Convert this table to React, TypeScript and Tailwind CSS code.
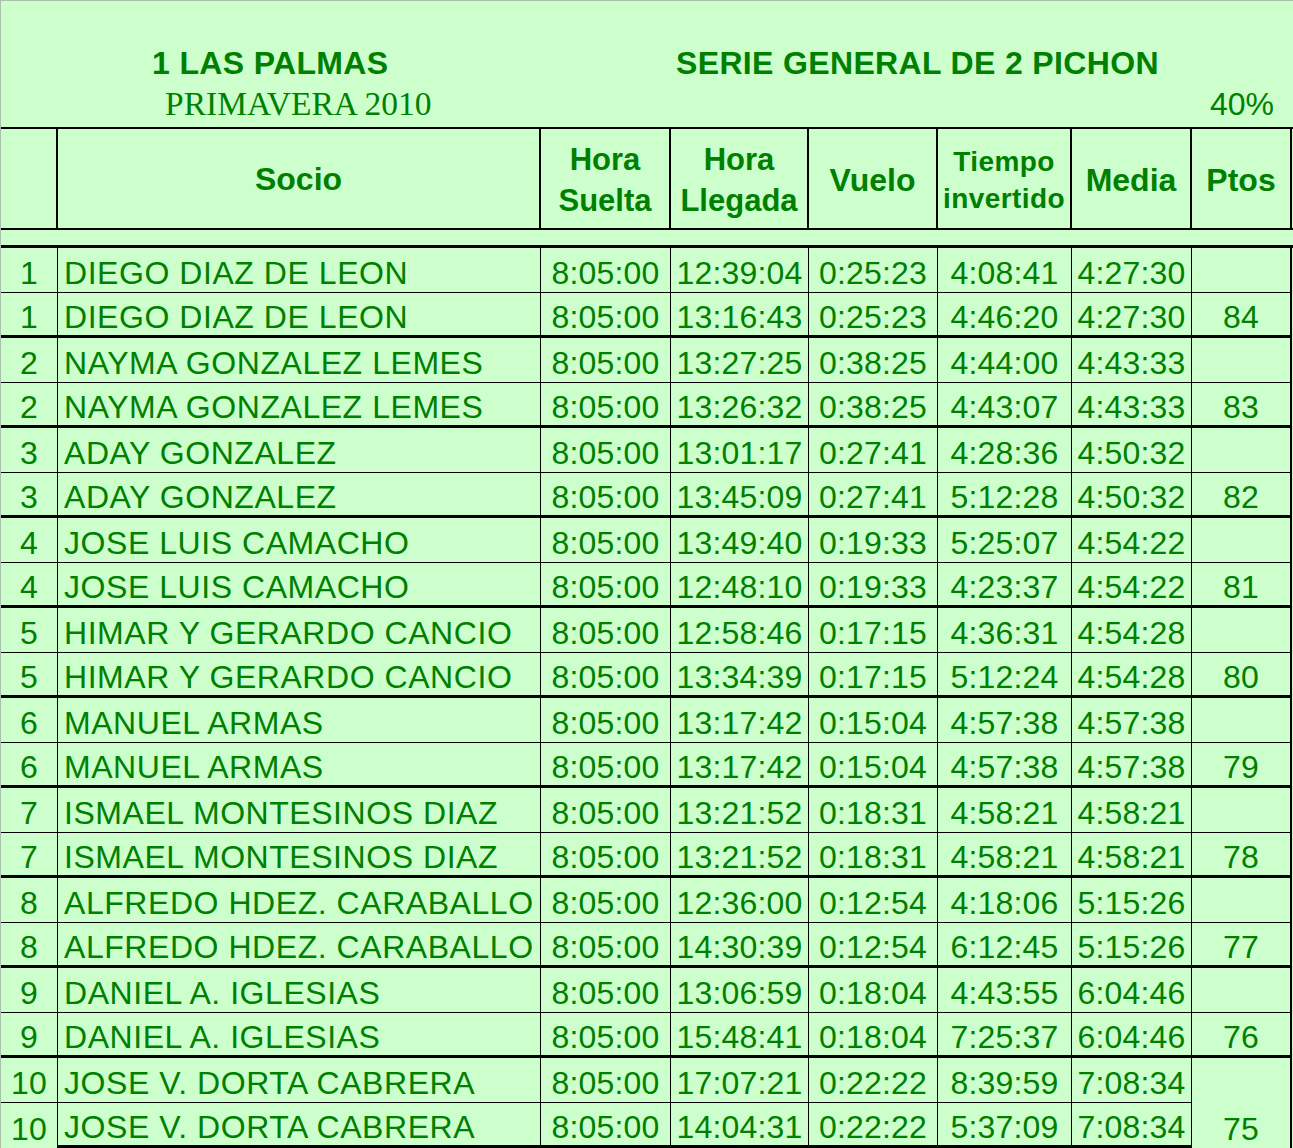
import React from "react";

type Row = [string, string, string, string, string, string, string, string];

const groups: [Row, Row][] = [
  [
    ["1", "DIEGO DIAZ DE LEON", "8:05:00", "12:39:04", "0:25:23", "4:08:41", "4:27:30", ""],
    ["1", "DIEGO DIAZ DE LEON", "8:05:00", "13:16:43", "0:25:23", "4:46:20", "4:27:30", "84"],
  ],
  [
    ["2", "NAYMA GONZALEZ LEMES", "8:05:00", "13:27:25", "0:38:25", "4:44:00", "4:43:33", ""],
    ["2", "NAYMA GONZALEZ LEMES", "8:05:00", "13:26:32", "0:38:25", "4:43:07", "4:43:33", "83"],
  ],
  [
    ["3", "ADAY GONZALEZ", "8:05:00", "13:01:17", "0:27:41", "4:28:36", "4:50:32", ""],
    ["3", "ADAY GONZALEZ", "8:05:00", "13:45:09", "0:27:41", "5:12:28", "4:50:32", "82"],
  ],
  [
    ["4", "JOSE LUIS CAMACHO", "8:05:00", "13:49:40", "0:19:33", "5:25:07", "4:54:22", ""],
    ["4", "JOSE LUIS CAMACHO", "8:05:00", "12:48:10", "0:19:33", "4:23:37", "4:54:22", "81"],
  ],
  [
    ["5", "HIMAR Y GERARDO CANCIO", "8:05:00", "12:58:46", "0:17:15", "4:36:31", "4:54:28", ""],
    ["5", "HIMAR Y GERARDO CANCIO", "8:05:00", "13:34:39", "0:17:15", "5:12:24", "4:54:28", "80"],
  ],
  [
    ["6", "MANUEL ARMAS", "8:05:00", "13:17:42", "0:15:04", "4:57:38", "4:57:38", ""],
    ["6", "MANUEL ARMAS", "8:05:00", "13:17:42", "0:15:04", "4:57:38", "4:57:38", "79"],
  ],
  [
    ["7", "ISMAEL MONTESINOS DIAZ", "8:05:00", "13:21:52", "0:18:31", "4:58:21", "4:58:21", ""],
    ["7", "ISMAEL MONTESINOS DIAZ", "8:05:00", "13:21:52", "0:18:31", "4:58:21", "4:58:21", "78"],
  ],
  [
    ["8", "ALFREDO HDEZ. CARABALLO", "8:05:00", "12:36:00", "0:12:54", "4:18:06", "5:15:26", ""],
    ["8", "ALFREDO HDEZ. CARABALLO", "8:05:00", "14:30:39", "0:12:54", "6:12:45", "5:15:26", "77"],
  ],
  [
    ["9", "DANIEL A. IGLESIAS", "8:05:00", "13:06:59", "0:18:04", "4:43:55", "6:04:46", ""],
    ["9", "DANIEL A. IGLESIAS", "8:05:00", "15:48:41", "0:18:04", "7:25:37", "6:04:46", "76"],
  ],
  [
    ["10", "JOSE V. DORTA CABRERA", "8:05:00", "17:07:21", "0:22:22", "8:39:59", "7:08:34", ""],
    ["10", "JOSE V. DORTA CABRERA", "8:05:00", "14:04:31", "0:22:22", "5:37:09", "7:08:34", "75"],
  ],
];

const widths = ["w-[57px]", "w-[483px]", "w-[130px]", "w-[138px]", "w-[129px]", "w-[134px]", "w-[120px]", "w-[100px]"];

function BodyRow({ row, second, last }: { row: Row; second: boolean; last: boolean }) {
  const bottom = second ? "border-b-[3px]" : "border-b";
  return (
    <div className="flex h-[45px]">
      {row.map((v, i) => {
        const isPtos = i === 7;
        const isRank = i === 0;
        let b = bottom;
        if (last && (isPtos || (isRank && second))) b = "border-b-0";
        const right = isPtos ? "border-r-2" : "border-r";
        const align = i === 1 ? "justify-start pl-[6px] tracking-[0.55px]" : "justify-center tracking-[0.2px]";
        return (
          <div
            key={i}
            className={`${widths[i]} ${right} ${b} border-black flex items-center ${align} pt-[6px] shrink-0 box-border`}
          >
            <span className="leading-[32px] whitespace-nowrap">{v}</span>
          </div>
        );
      })}
    </div>
  );
}

export default function App() {
  return (
    <div
      className="w-[1293px] h-[1148px] overflow-hidden bg-[#ccffcc] border-t border-l border-[#a9c2a9] text-[#008000] box-border"
      style={{ fontFamily: '"Liberation Sans", Arial, sans-serif' }}
    >
      {/* Title block */}
      <div className="h-[126px] box-border pt-[46px]">
        <div className="flex h-[32px] text-[32px] leading-[32px] font-bold tracking-[0.35px]">
          <span className="pl-[151px] w-[675px] shrink-0 whitespace-nowrap">1 LAS PALMAS</span>
          <span className="whitespace-nowrap">SERIE GENERAL DE 2 PICHON</span>
        </div>
        <div className="flex mt-[9px] h-[32px] leading-[32px] justify-between pr-[19px]">
          <span
            className="pl-[164px] text-[33.5px] whitespace-nowrap"
            style={{ fontFamily: '"Liberation Serif", "Times New Roman", serif' }}
          >
            PRIMAVERA 2010
          </span>
          <span className="text-[32px] whitespace-nowrap">40%</span>
        </div>
      </div>

      {/* Header row */}
      <div className="flex h-[103px] border-t-2 border-b-2 border-black box-border font-bold">
        <div className="w-[57px] shrink-0 border-r-2 border-black" />
        <div className="w-[483px] shrink-0 border-r-2 border-black flex items-center justify-center text-[32px] leading-[32px]">
          Socio
        </div>
        <div className="w-[130px] shrink-0 border-r-2 border-black flex flex-col items-center justify-center text-[31px] leading-[41px] pt-[2px]">
          <span>Hora</span>
          <span>Suelta</span>
        </div>
        <div className="w-[138px] shrink-0 border-r-2 border-black flex flex-col items-center justify-center text-[31px] leading-[41px] pt-[2px]">
          <span>Hora</span>
          <span className="whitespace-nowrap">Llegada</span>
        </div>
        <div className="w-[129px] shrink-0 border-r-2 border-black flex items-center justify-center text-[32px] leading-[32px] pt-[2px]">
          Vuelo
        </div>
        <div className="w-[134px] shrink-0 border-r-2 border-black flex flex-col items-center justify-center text-[28px] leading-[37px] tracking-[0.4px] pt-[2px]">
          <span>Tiempo</span>
          <span className="whitespace-nowrap">invertido</span>
        </div>
        <div className="w-[120px] shrink-0 border-r-2 border-black flex items-center justify-center text-[32px] leading-[32px] pt-[2px]">
          Media
        </div>
        <div className="w-[100px] shrink-0 border-r-2 border-black flex items-center justify-center text-[32px] leading-[32px] pt-[2px]">
          Ptos
        </div>
      </div>

      {/* Gap */}
      <div className="h-[15px]" />

      {/* Body */}
      <div className="border-t-[3px] border-black text-[32px]">
        {groups.map((g, gi) => (
          <div key={gi}>
            <BodyRow row={g[0]} second={false} last={gi === groups.length - 1} />
            <BodyRow row={g[1]} second={true} last={gi === groups.length - 1} />
          </div>
        ))}
      </div>
    </div>
  );
}
